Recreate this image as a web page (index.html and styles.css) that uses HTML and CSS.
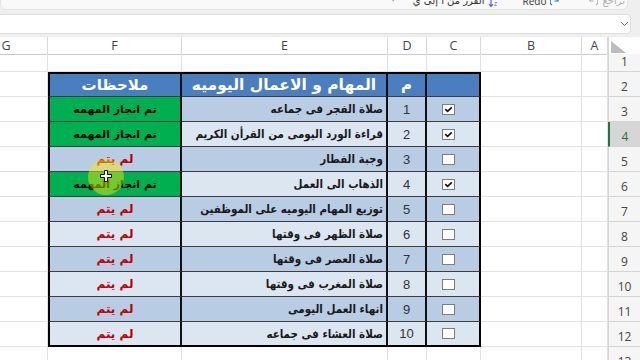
FILE: index.html
```html
<!DOCTYPE html>
<html lang="ar">
<head>
<meta charset="utf-8">
<title>المهام اليومية</title>
<link rel="stylesheet" href="styles.css">
</head>
<body>
<svg class="defs" width="0" height="0" aria-hidden="true">
  <symbol id="box-on" viewBox="0 0 13 11">
    <rect x="0.5" y="0.5" width="12" height="10" fill="#fff" stroke="#7d7d7d"/>
    <path d="M3.3 5.2 L5.6 7.4 L9.8 3.3" fill="none" stroke="#111" stroke-width="1.7"/>
  </symbol>
  <symbol id="box-off" viewBox="0 0 13 11">
    <rect x="0.5" y="0.5" width="12" height="10" fill="#fff" stroke="#7d7d7d"/>
  </symbol>
</svg>
<div class="app">
  <div class="toolbar">
    <div class="tb-panel">
      <span class="tb-dot">·</span>
      <span class="tb-text" dir="rtl">الفرز من أ إلى ي</span>
      <svg class="tb-icon" width="10" height="14" viewBox="0 0 10 14"><path d="M3 1v11M1 10l2 2.5L5 10" fill="none" stroke="#5b5fc7" stroke-width="1.2"/><text x="6" y="6" font-size="5" fill="#5b5fc7" font-family="Liberation Sans">A</text><text x="6" y="12" font-size="5" fill="#5b5fc7" font-family="Liberation Sans">Z</text></svg>
      <span class="tb-text redo">Redo</span>
      <svg class="tb-icon" width="10" height="14" viewBox="0 0 10 14"><path d="M2 11a4 4 0 1 1 6-4M8 3.5V7H4.5" fill="none" stroke="#2f6fc0" stroke-width="1.2"/></svg>
      <svg class="tb-icon undo" width="10" height="14" viewBox="0 0 10 14"><path d="M8 11a4 4 0 1 0 -6-4M2 3.5V7h3.5" fill="none" stroke="#b0b0b0" stroke-width="1.2"/></svg>
      <span class="tb-text muted" dir="rtl">تراجع</span>
    </div>
  </div>
  <div class="fbar">
    <div class="fbox">
      <svg width="9" height="6" viewBox="0 0 9 6"><path d="M1 1l3.5 3.5L8 1" fill="none" stroke="#666" stroke-width="1"/></svg>
    </div>
  </div>

  <div class="sheet">
    <div class="row colhead">
      <div class="ch">G</div><div class="ch">F</div><div class="ch">E</div><div class="ch">D</div><div class="ch">C</div><div class="ch">B</div><div class="ch">A</div>
      <div class="ch corner"><svg width="15" height="12" viewBox="0 0 15 12"><polygon points="0,0 0,12 15,12" fill="#bcbcbc"/></svg></div>
    </div>

    <div class="row first">
      <div class="cell"></div><div class="cell"></div><div class="cell"></div><div class="cell"></div><div class="cell"></div><div class="cell"></div><div class="cell"></div>
      <div class="rh">1</div>
    </div>

    <div class="row head">
      <div class="cell"></div>
      <div class="t f">ملاحظات</div>
      <div class="t e">المهام و الاعمال اليوميه</div>
      <div class="t d">م</div>
      <div class="t c"></div>
      <div class="cell"></div><div class="cell"></div>
      <div class="rh">2</div>
    </div>

    <div class="row dark">
      <div class="cell"></div>
      <div class="t f done">تم انجاز المهمه</div>
      <div class="t e">صلاة الفجر فى جماعه</div>
      <div class="t d">1</div>
      <div class="t c"><svg class="cb"><use href="#box-on"/></svg></div>
      <div class="cell"></div><div class="cell"></div>
      <div class="rh">3</div>
    </div>

    <div class="row light">
      <div class="cell"></div>
      <div class="t f done">تم انجاز المهمه</div>
      <div class="t e">قراءة الورد اليومى من القرأن الكريم</div>
      <div class="t d">2</div>
      <div class="t c"><svg class="cb"><use href="#box-on"/></svg></div>
      <div class="cell"></div><div class="cell"></div>
      <div class="rh sel">4</div>
    </div>

    <div class="row dark">
      <div class="cell"></div>
      <div class="t f no">لم يتم</div>
      <div class="t e">وجبة الفطار</div>
      <div class="t d">3</div>
      <div class="t c"><svg class="cb"><use href="#box-off"/></svg></div>
      <div class="cell"></div><div class="cell"></div>
      <div class="rh">5</div>
    </div>

    <div class="row light">
      <div class="cell"></div>
      <div class="t f done">تم انجاز المهمه</div>
      <div class="t e">الذهاب الى العمل</div>
      <div class="t d">4</div>
      <div class="t c"><svg class="cb"><use href="#box-on"/></svg></div>
      <div class="cell"></div><div class="cell"></div>
      <div class="rh">6</div>
    </div>

    <div class="row dark">
      <div class="cell"></div>
      <div class="t f no">لم يتم</div>
      <div class="t e">توزيع المهام اليوميه على الموظفين</div>
      <div class="t d">5</div>
      <div class="t c"><svg class="cb"><use href="#box-off"/></svg></div>
      <div class="cell"></div><div class="cell"></div>
      <div class="rh">7</div>
    </div>

    <div class="row light">
      <div class="cell"></div>
      <div class="t f no">لم يتم</div>
      <div class="t e">صلاة الظهر فى وقتها</div>
      <div class="t d">6</div>
      <div class="t c"><svg class="cb"><use href="#box-off"/></svg></div>
      <div class="cell"></div><div class="cell"></div>
      <div class="rh">8</div>
    </div>

    <div class="row dark">
      <div class="cell"></div>
      <div class="t f no">لم يتم</div>
      <div class="t e">صلاة العصر فى وقتها</div>
      <div class="t d">7</div>
      <div class="t c"><svg class="cb"><use href="#box-off"/></svg></div>
      <div class="cell"></div><div class="cell"></div>
      <div class="rh">9</div>
    </div>

    <div class="row light">
      <div class="cell"></div>
      <div class="t f no">لم يتم</div>
      <div class="t e">صلاة المغرب فى وقتها</div>
      <div class="t d">8</div>
      <div class="t c"><svg class="cb"><use href="#box-off"/></svg></div>
      <div class="cell"></div><div class="cell"></div>
      <div class="rh">10</div>
    </div>

    <div class="row dark">
      <div class="cell"></div>
      <div class="t f no">لم يتم</div>
      <div class="t e">انهاء العمل اليومى</div>
      <div class="t d">9</div>
      <div class="t c"><svg class="cb"><use href="#box-off"/></svg></div>
      <div class="cell"></div><div class="cell"></div>
      <div class="rh">11</div>
    </div>

    <div class="row light last">
      <div class="cell"></div>
      <div class="t f no">لم يتم</div>
      <div class="t e">صلاة العشاء فى جماعه</div>
      <div class="t d">10</div>
      <div class="t c"><svg class="cb"><use href="#box-off"/></svg></div>
      <div class="cell"></div><div class="cell"></div>
      <div class="rh">12</div>
    </div>

    <div class="row">
      <div class="cell"></div><div class="cell"></div><div class="cell"></div><div class="cell"></div><div class="cell"></div><div class="cell"></div><div class="cell"></div>
      <div class="rh">13</div>
    </div>
  </div>

  <div class="spot"></div>
  <svg class="pointer" width="12" height="12" viewBox="-0.5 -0.5 12 12"><path d="M4 0h3v4h4v3H7v4H4V7H0V4h4z" fill="#fff" stroke="#000" stroke-width="1"/></svg>
</div>
</body>
</html>
```

FILE: styles.css
```css
* { box-sizing: border-box; margin: 0; padding: 0; }

html, body { width: 640px; height: 360px; overflow: hidden; }

body {
  background: #fff;
  font-family: "Open Sans", "DejaVu Sans", sans-serif;
  direction: ltr;
}

.defs { position: absolute; width: 0; height: 0; }

.app {
  position: relative;
  width: 640px;
  height: 360px;
  overflow: hidden;
}

/* top ribbon strip (cut off) */
.toolbar {
  height: 10px;
  background: #efefef;
  display: flex;
  padding-right: 12px;
  overflow: hidden;
}

.tb-panel {
  flex: 1;
  height: 19px;
  margin-top: -9px;
  background: #f9f9f9;
  border: 1px solid #e4e4e4;
  border-radius: 6px;
  display: flex;
  justify-content: flex-end;
  align-items: center;
  padding-right: 2px;
  font-family: "DejaVu Sans", sans-serif;
  font-size: 10px;
  color: #333;
}

.tb-dot { margin-right: 18px; color: #777; }
.tb-text { white-space: nowrap; }
.tb-icon { margin: 0 4px; }
.redo { margin-left: 20px; font-family: "Open Sans", sans-serif; }
.undo { margin-left: 24px; }
.muted { color: #b0b0b0; }

/* formula bar */
.fbar {
  height: 27px;
  background: #efefef;
  margin-left: -10px;
  padding: 4px 9px 3px 0;
}

.fbox {
  height: 20px;
  background: #fff;
  border: 1px solid #dedede;
  border-radius: 4px;
  display: flex;
  justify-content: flex-end;
  align-items: center;
  padding-right: 1px;
}

/* sheet grid */
.sheet {
  margin-left: -35px;
  width: 675px;
}

.row {
  display: grid;
  grid-template-columns: 83px 134px 206px 39px 54px 101px 26px 32px;
  height: 25px;
}

.row.colhead { height: 17px; background: #fff; }
.row.first { height: 18px; }

.ch {
  display: flex;
  align-items: center;
  justify-content: center;
  font-family: "Open Sans", sans-serif;
  font-size: 12.5px;
  color: #444;
  border-right: 1px solid #d8d8d8;
  border-bottom: 1px solid #c8c8c8;
}

.ch.corner {
  border-right: none;
  border-left: 1px solid #d8d8d8;
  justify-content: flex-start;
  align-items: flex-end;
  padding: 0 0 1px 2px;
}

.cell {
  border-right: 1px solid #e1e1e1;
  border-bottom: 1px solid #e1e1e1;
}

.rh {
  background: #f5f5f5;
  border-left: 1px solid #d4d4d4;
  border-bottom: 1px solid #d4d4d4;
  display: flex;
  align-items: flex-end;
  justify-content: center;
  padding-bottom: 2px;
  font-family: "Open Sans", sans-serif;
  font-size: 12px;
  line-height: 15px;
  color: #444;
}

.rh.sel {
  background: #d6d6d6;
  border-left: 2px solid #217346;
  color: #217346;
}

/* task table */
.t {
  display: flex;
  align-items: center;
  overflow: hidden;
  white-space: nowrap;
  border-bottom: 1px solid #3d3d3d;
  font-family: "DejaVu Sans", sans-serif;
}

.t.f {
  border-left: 2px solid #000;
  border-right: 2px solid #111;
  justify-content: center;
  direction: rtl;
  font-weight: bold;
}

.t.e {
  border-right: 2px solid #111;
  direction: rtl;
  justify-content: flex-start;
  padding-right: 3px;
  font-family: "DejaVu Sans Condensed", "DejaVu Sans", sans-serif;
  font-weight: bold;
  font-size: 11.5px;
  color: #1a1a1a;
}

.t.d {
  border-right: 2px solid #111;
  justify-content: center;
  font-family: "Liberation Sans", sans-serif;
  font-size: 13px;
  color: #333;
}

.t.c {
  border-right: 2px solid #000;
  justify-content: center;
  padding-right: 10px;
}

.cb { width: 13px; height: 11px; }

.row.dark .t { background: #b8cce4; }
.row.light .t { background: #dce6f1; }

.t.f.done {
  background: #00b050;
  color: #000;
  font-size: 11px;
}

.t.f.no {
  color: #c00000;
  font-size: 12px;
}

.row.head .t {
  background: #4a7ebf;
  color: #fff;
  font-weight: bold;
  font-size: 15px;
  border-top: 2px solid #000;
  font-family: "DejaVu Sans", sans-serif;
}

.row.head .t.e {
  justify-content: center;
  padding-right: 0;
  font-size: 15.5px;
}

.row.head .t.d { font-size: 15px; }

.row.last .t { border-bottom: 2px solid #000; }

/* screen-recording cursor highlight */
.spot {
  position: absolute;
  left: 88px;
  top: 159px;
  width: 36px;
  height: 36px;
  border-radius: 50%;
  background: rgba(255, 236, 0, 0.45);
}

.pointer {
  position: absolute;
  left: 100px;
  top: 170px;
}
```
